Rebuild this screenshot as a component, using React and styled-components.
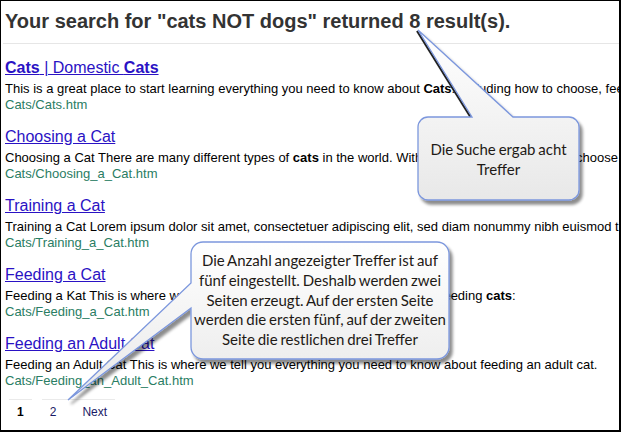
import React from "react";
import styled, { createGlobalStyle } from "styled-components";

const Global = createGlobalStyle`
  html, body { margin: 0; padding: 0; background: #fff; }
  body { font-family: "Liberation Sans", Arial, sans-serif; }
`;

const Frame = styled.div`
  position: relative;
  width: 621px;
  height: 432px;
  box-sizing: border-box;
  border-left: 1px solid #000;
  border-top: 1px solid #000;
  border-right: 2px solid #000;
  border-bottom: 2px solid #000;
  overflow: hidden;
  background: #fff;
`;

const Heading = styled.h1`
  margin: 7px 0 0 4px;
  font-family: "Liberation Sans", Arial, sans-serif;
  font-size: 20px;
  line-height: 26px;
  font-weight: bold;
  color: #333;
  white-space: nowrap;
`;

const Rule = styled.hr`
  margin: 9px 0 0 2px;
  border: 0;
  border-top: 1px solid #e6e6e6;
  height: 0;
`;

const Results = styled.div`
  display: flex;
  flex-direction: column;
  gap: 15px;
  padding: 15px 0 0 4px;
`;

const Result = styled.div`
  display: flex;
  flex-direction: column;
`;

const Title = styled.a`
  font-size: 16px;
  line-height: 18px;
  color: #2a12c4;
  text-decoration: underline;
  margin-bottom: 4px;
  white-space: nowrap;
  b { font-weight: bold; }
`;

const Snippet = styled.div`
  font-size: 13px;
  line-height: 16px;
  color: #000;
  white-space: nowrap;
`;

const Url = styled.div`
  font-size: 13px;
  line-height: 16px;
  color: #2a7d63;
  white-space: nowrap;
`;

const Pager = styled.div`
  display: flex;
  gap: 10px;
  padding: 10px 0 0 8px;
`;

const PageGroup = styled.div`
  display: flex;
  border-top: 1px solid #eaeaea;
`;

const PageItem = styled.span`
  font-size: 12px;
  line-height: 14px;
  padding: 5px ${(p) => p.$pr || 8}px 0 ${(p) => p.$pl || 8}px;
  color: ${(p) => (p.$current ? "#000" : "#1a1a66")};
  font-weight: ${(p) => (p.$current ? "bold" : "normal")};
`;

const Overlay = styled.svg`
  position: absolute;
  left: -1px;
  top: -1px;
  width: 621px;
  height: 432px;
  pointer-events: none;
`;

const CalloutText = styled.div`
  position: absolute;
  left: ${(p) => p.$x - 1}px;
  top: ${(p) => p.$y - 1}px;
  width: ${(p) => p.$w}px;
  height: ${(p) => p.$h}px;
  display: flex;
  align-items: center;
  justify-content: center;
  text-align: center;
  font-family: Lato, "Open Sans", sans-serif;
  font-size: ${(p) => p.$size}px;
  line-height: ${(p) => p.$lh}px;
  word-spacing: -1px;
  color: #1e1a16;
`;

const results = [
  {
    title: (
      <>
        <b>Cats</b> | Domestic <b>Cats</b>
      </>
    ),
    snippet: (
      <>
        This is a great place to start learning everything you need to know about <b>Cats</b>. Including how to choose, feed and care for them.
      </>
    ),
    url: "Cats/Cats.htm",
  },
  {
    title: "Choosing a Cat",
    snippet: (
      <>
        Choosing a Cat There are many different types of <b>cats</b> in the world. With this many breeds around, choose from them wisely.
      </>
    ),
    url: "Cats/Choosing_a_Cat.htm",
  },
  {
    title: "Training a Cat",
    snippet: "Training a Cat Lorem ipsum dolor sit amet, consectetuer adipiscing elit, sed diam nonummy nibh euismod tincidunt ut laoreet.",
    url: "Cats/Training_a_Cat.htm",
  },
  {
    title: "Feeding a Cat",
    snippet: (
      <>
        Feeding a Kat This is where we tell you everything you need to know about feeding <b>cats</b>:
      </>
    ),
    url: "Cats/Feeding_a_Cat.htm",
  },
  {
    title: "Feeding an Adult Cat",
    snippet: "Feeding an Adult Cat This is where we tell you everything you need to know about feeding an adult cat.",
    url: "Cats/Feeding_an_Adult_Cat.htm",
  },
];

const callout1 =
  "M 428 117 L 472 117 L 418 30 L 513 117 L 569 117 A 10 10 0 0 1 579 127 L 579 190 A 10 10 0 0 1 569 200 L 428 200 A 10 10 0 0 1 418 190 L 418 127 A 10 10 0 0 1 428 117 Z";
const callout2 =
  "M 203 242 L 437 242 A 12 12 0 0 1 449 254 L 449 347 A 12 12 0 0 1 437 359 L 203 359 A 12 12 0 0 1 191 347 L 191 308 L 68 400 L 191 283 L 191 254 A 12 12 0 0 1 203 242 Z";

export default function App() {
  return (
    <>
      <Global />
      <Frame>
        <Heading>Your search for "cats NOT dogs" returned 8 result(s).</Heading>
        <Rule />
        <Results>
          {results.map((r) => (
            <Result key={r.url}>
              <Title href="#">{r.title}</Title>
              <Snippet>{r.snippet}</Snippet>
              <Url>{r.url}</Url>
            </Result>
          ))}
        </Results>
        <Pager>
          <PageGroup>
            <PageItem $current>1</PageItem>
          </PageGroup>
          <PageGroup>
            <PageItem $pl={8} $pr={14}>2</PageItem>
            <PageItem $pl={12} $pr={8}>Next</PageItem>
          </PageGroup>
        </Pager>
        <Overlay viewBox="0 0 621 432">
          <defs>
            <linearGradient id="g1" x1="0" y1="0" x2="0" y2="1">
              <stop offset="0" stopColor="#ffffff" />
              <stop offset="1" stopColor="#e8e8e8" />
            </linearGradient>
            <filter id="sh" x="-20%" y="-20%" width="140%" height="140%">
              <feDropShadow dx="3" dy="4" stdDeviation="1.6" floodColor="#000" floodOpacity="0.45" />
            </filter>
          </defs>
          <line x1="417" y1="31" x2="471" y2="118" stroke="#222" strokeWidth="2" />
          <path d={callout1} fill="url(#g1)" stroke="#7c97dd" strokeWidth="1.3" filter="url(#sh)" />
          <path d={callout2} fill="url(#g1)" stroke="#7c97dd" strokeWidth="1.3" filter="url(#sh)" />
        </Overlay>
        <CalloutText $x={418} $y={117} $w={161} $h={83} $size={15} $lh={20}>
          Die Suche ergab acht<br />Treffer
        </CalloutText>
        <CalloutText $x={191} $y={242} $w={258} $h={117} $size={15} $lh={19.7}>
          Die Anzahl angezeigter Treffer ist auf<br />
          fünf eingestellt. Deshalb werden zwei<br />
          Seiten erzeugt. Auf der ersten Seite<br />
          werden die ersten fünf, auf der zweiten<br />
          Seite die restlichen drei Treffer
        </CalloutText>
      </Frame>
    </>
  );
}
